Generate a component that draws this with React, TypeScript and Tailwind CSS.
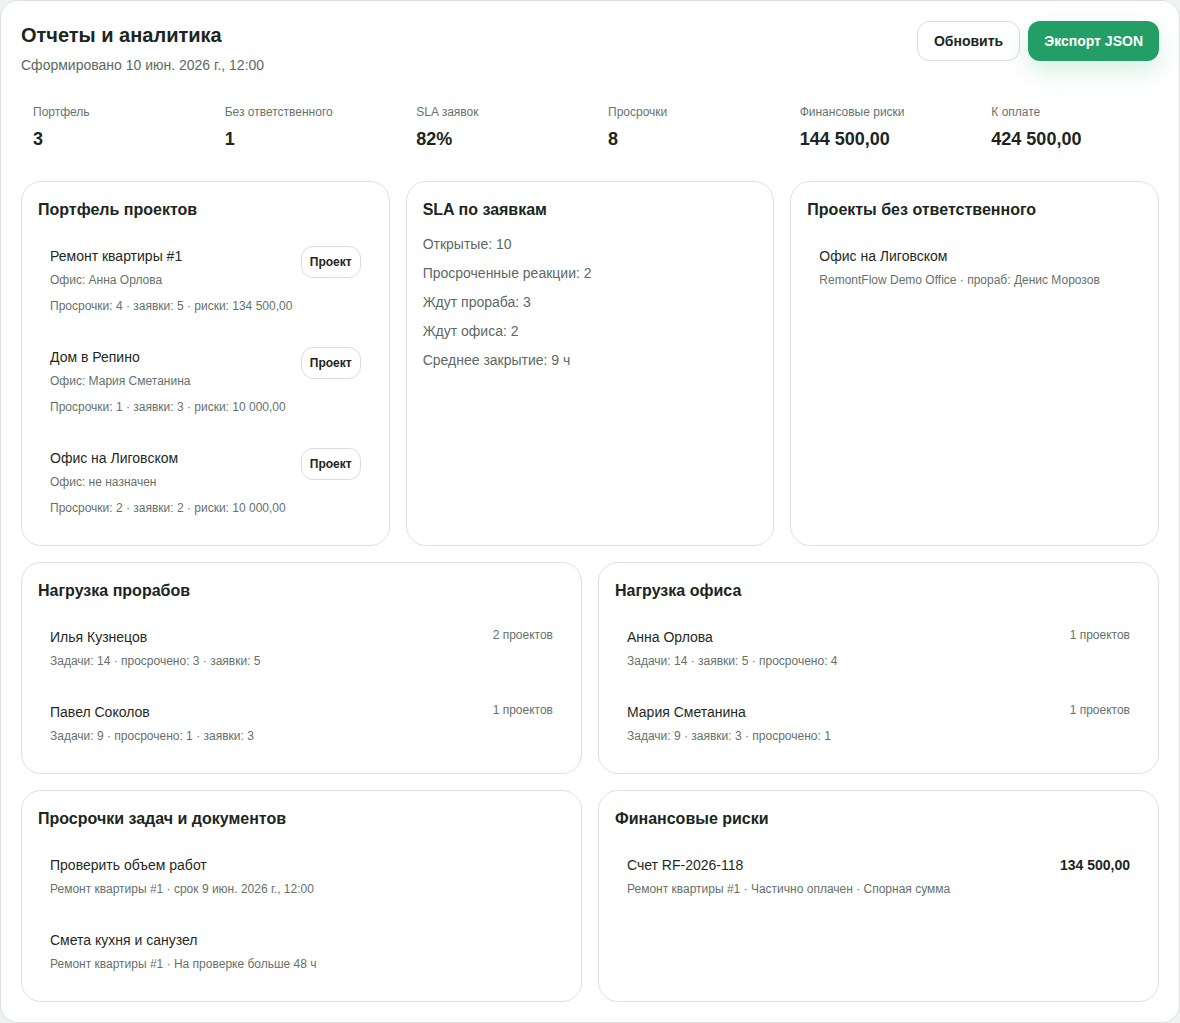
import React from 'react';

const stats = [
  { label: 'Портфель', value: '3' },
  { label: 'Без ответственного', value: '1' },
  { label: 'SLA заявок', value: '82%' },
  { label: 'Просрочки', value: '8' },
  { label: 'Финансовые риски', value: '144 500,00' },
  { label: 'К оплате', value: '424 500,00' },
];

const portfolio = [
  { name: 'Ремонт квартиры #1', office: 'Офис: Анна Орлова', meta: 'Просрочки: 4 · заявки: 5 · риски: 134 500,00' },
  { name: 'Дом в Репино', office: 'Офис: Мария Сметанина', meta: 'Просрочки: 1 · заявки: 3 · риски: 10 000,00' },
  { name: 'Офис на Лиговском', office: 'Офис: не назначен', meta: 'Просрочки: 2 · заявки: 2 · риски: 10 000,00' },
];

const sla = ['Открытые: 10', 'Просроченные реакции: 2', 'Ждут прораба: 3', 'Ждут офиса: 2', 'Среднее закрытие: 9 ч'];

const foremen = [
  { name: 'Илья Кузнецов', count: '2 проектов', meta: 'Задачи: 14 · просрочено: 3 · заявки: 5' },
  { name: 'Павел Соколов', count: '1 проектов', meta: 'Задачи: 9 · просрочено: 1 · заявки: 3' },
];

const office = [
  { name: 'Анна Орлова', count: '1 проектов', meta: 'Задачи: 14 · заявки: 5 · просрочено: 4' },
  { name: 'Мария Сметанина', count: '1 проектов', meta: 'Задачи: 9 · заявки: 3 · просрочено: 1' },
];

const overdue = [
  { name: 'Проверить объем работ', meta: 'Ремонт квартиры #1 · срок 9 июн. 2026 г., 12:00' },
  { name: 'Смета кухня и санузел', meta: 'Ремонт квартиры #1 · На проверке больше 48 ч' },
];

const Card = ({ title, children }: { title: string; children: React.ReactNode }) => (
  <div className="rounded-[20px] border border-[#dce3df] bg-white px-4 pt-4 pb-[17px]">
    <h2 className="text-base leading-6 font-bold text-[#1b2621]">{title}</h2>
    {children}
  </div>
);

const App = () => {
  return (
    <div className="min-h-screen bg-[#eef2f0] font-['Liberation_Sans',Arial,sans-serif]">
      <div className="rounded-[18px] border border-[#dce3df] bg-white p-5">
        {/* header */}
        <div className="flex items-start justify-between">
          <div>
            <h1 className="text-xl leading-7 font-bold text-[#1b2621]">Отчеты и аналитика</h1>
            <p className="mt-1.5 text-sm leading-5 text-[#5d6964]">Сформировано 10 июн. 2026 г., 12:00</p>
          </div>
          <div className="flex gap-2">
            <button className="h-10 rounded-xl border border-[#d6dfda] bg-white px-4 text-sm font-bold text-[#1b2621]">Обновить</button>
            <button className="h-10 rounded-xl bg-[#229e66] px-4 text-sm font-bold text-white shadow-[0_10px_24px_rgba(34,158,102,0.18)]">Экспорт JSON</button>
          </div>
        </div>

        {/* stats */}
        <div className="mt-[17px] grid grid-cols-6 gap-3">
          {stats.map((s) => (
            <div key={s.label} className="p-3">
              <div className="text-xs leading-4 text-[#68736e]">{s.label}</div>
              <div className="mt-[7px] text-lg leading-6 font-bold text-[#1b2621]">{s.value}</div>
            </div>
          ))}
        </div>

        {/* row 1 */}
        <div className="mt-[18px] grid grid-cols-3 gap-4">
          <Card title="Портфель проектов">
            <div className="mt-3 flex flex-col gap-[9px]">
              {portfolio.map((p) => (
                <div key={p.name} className="flex items-start justify-between p-3">
                  <div>
                    <div className="text-sm leading-5 text-[#1f2923]">{p.name}</div>
                    <div className="mt-1.5 text-xs leading-4 text-[#66716c]">{p.office}</div>
                    <div className="mt-2.5 text-xs leading-4 text-[#66716c]">{p.meta}</div>
                  </div>
                  <button className="h-8 rounded-xl border border-[#d6dfda] bg-white px-2 text-xs font-bold text-[#1b2621]">Проект</button>
                </div>
              ))}
            </div>
          </Card>
          <Card title="SLA по заявкам">
            <div className="mt-3 flex flex-col gap-[9px]">
              {sla.map((l) => (
                <div key={l} className="text-sm leading-5 text-[#5d6964]">{l}</div>
              ))}
            </div>
          </Card>
          <Card title="Проекты без ответственного">
            <div className="mt-3 p-3">
              <div className="text-sm leading-5 text-[#1f2923]">Офис на Лиговском</div>
              <div className="mt-1.5 text-xs leading-4 text-[#66716c]">RemontFlow Demo Office · прораб: Денис Морозов</div>
            </div>
          </Card>
        </div>

        {/* row 2 */}
        <div className="mt-4 grid grid-cols-2 gap-4">
          <Card title="Нагрузка прорабов">
            <div className="mt-3 flex flex-col gap-[9px]">
              {foremen.map((f) => (
                <div key={f.name} className="flex items-start justify-between p-3">
                  <div>
                    <div className="text-sm leading-5 text-[#1f2923]">{f.name}</div>
                    <div className="mt-1.5 text-xs leading-4 text-[#66716c]">{f.meta}</div>
                  </div>
                  <div className="text-xs leading-4 text-[#66716c]">{f.count}</div>
                </div>
              ))}
            </div>
          </Card>
          <Card title="Нагрузка офиса">
            <div className="mt-3 flex flex-col gap-[9px]">
              {office.map((f) => (
                <div key={f.name} className="flex items-start justify-between p-3">
                  <div>
                    <div className="text-sm leading-5 text-[#1f2923]">{f.name}</div>
                    <div className="mt-1.5 text-xs leading-4 text-[#66716c]">{f.meta}</div>
                  </div>
                  <div className="text-xs leading-4 text-[#66716c]">{f.count}</div>
                </div>
              ))}
            </div>
          </Card>
        </div>

        {/* row 3 */}
        <div className="mt-4 grid grid-cols-2 gap-4">
          <Card title="Просрочки задач и документов">
            <div className="mt-3 flex flex-col gap-[9px]">
              {overdue.map((o) => (
                <div key={o.name} className="p-3">
                  <div className="text-sm leading-5 text-[#1f2923]">{o.name}</div>
                  <div className="mt-1.5 text-xs leading-4 text-[#66716c]">{o.meta}</div>
                </div>
              ))}
            </div>
          </Card>
          <Card title="Финансовые риски">
            <div className="mt-3 flex items-start justify-between p-3">
              <div>
                <div className="text-sm leading-5 text-[#1f2923]">Счет RF-2026-118</div>
                <div className="mt-1.5 text-xs leading-4 text-[#66716c]">Ремонт квартиры #1 · Частично оплачен · Спорная сумма</div>
              </div>
              <div className="text-sm leading-5 font-bold text-[#1b2621]">134 500,00</div>
            </div>
          </Card>
        </div>
      </div>
    </div>
  );
};

export default App;
